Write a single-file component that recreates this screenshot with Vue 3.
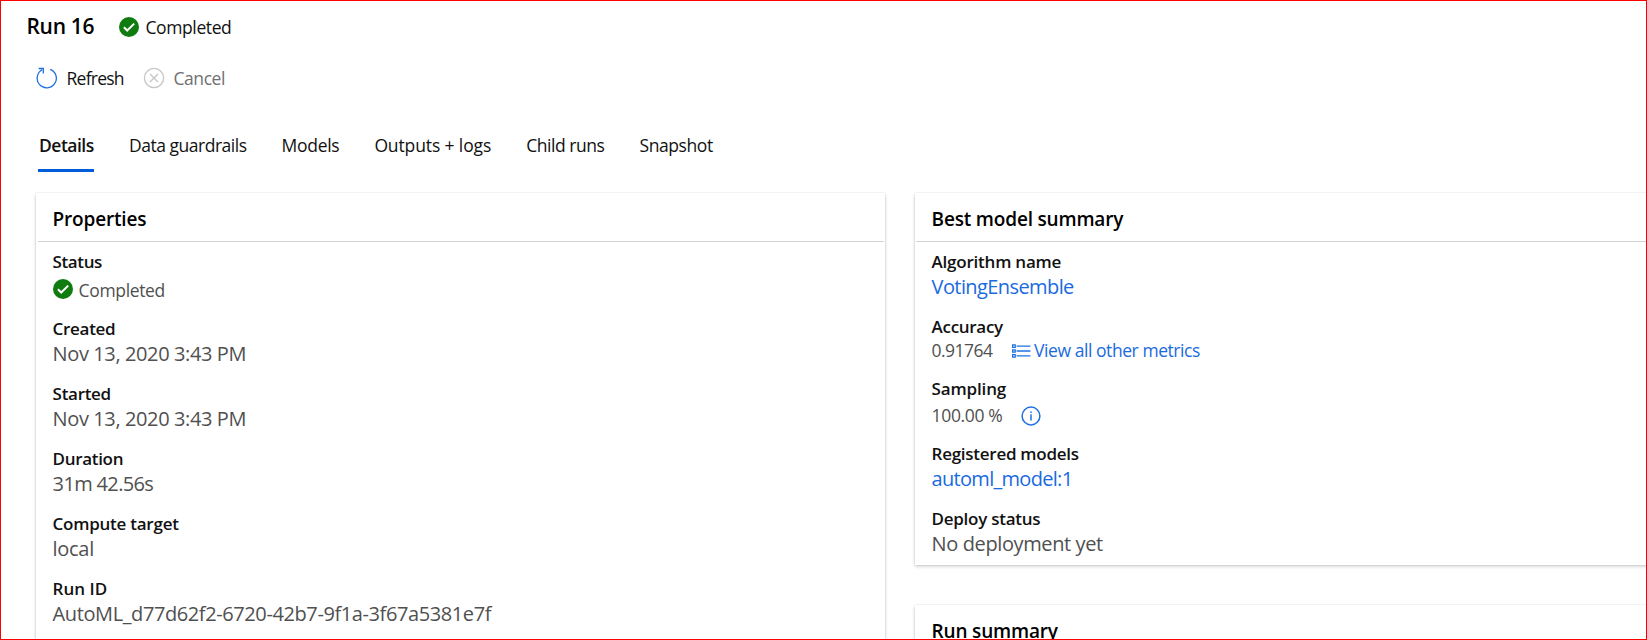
<script setup>
const tabs = [
  { label: 'Details', spacing: -0.5, active: true },
  { label: 'Data guardrails', spacing: -0.48 },
  { label: 'Models', spacing: -0.3 },
  { label: 'Outputs + logs', spacing: -0.12 },
  { label: 'Child runs', spacing: -0.45 },
  { label: 'Snapshot', spacing: -0.42 },
]

const properties = [
  { label: 'Status', ls: -0.4, value: 'Completed', vs: -0.35, kind: 'status' },
  { label: 'Created', ls: -0.3, value: 'Nov 13, 2020 3:43 PM', vs: -0.39 },
  { label: 'Started', ls: -0.3, value: 'Nov 13, 2020 3:43 PM', vs: -0.39 },
  { label: 'Duration', ls: -0.32, value: '31m 42.56s', vs: -0.65 },
  { label: 'Compute target', ls: -0.25, value: 'local', vs: -0.3 },
  { label: 'Run ID', ls: 0, value: 'AutoML_d77d62f2-6720-42b7-9f1a-3f67a5381e7f', vs: -0.4 },
]

const summary = [
  { label: 'Algorithm name', ls: -0.23, value: 'VotingEnsemble', vs: -0.59, kind: 'link' },
  { label: 'Accuracy', ls: -0.3, value: '0.91764', vs: -0.55, kind: 'metric' },
  { label: 'Sampling', ls: -0.15, value: '100.00 %', vs: -0.35, kind: 'sampling' },
  { label: 'Registered models', ls: -0.27, value: 'automl_model:1', vs: -0.7, kind: 'link' },
  { label: 'Deploy status', ls: -0.27, value: 'No deployment yet', vs: -0.39 },
]

const track = (px) => ({ letterSpacing: px + 'px' })
</script>

<template>
  <div class="page">
    <header class="title-row">
      <h1>Run 16</h1>
      <svg class="check" viewBox="0 0 20 20"><circle cx="10" cy="10" r="10" /><path d="M4.9 10.2 8.2 13.5 15.2 6.6" /></svg>
      <span class="state">Completed</span>
    </header>

    <div class="toolbar">
      <button class="cmd refresh">
        <svg viewBox="0 0 22 22"><path d="M14.2 2.3A9.6 9.6 0 1 1 6.2 2.8M2.6 1.5H7.3V6.4" /></svg>
        <span>Refresh</span>
      </button>
      <button class="cmd cancel">
        <svg viewBox="0 0 22 22"><circle cx="11" cy="11" r="9.6" /><path d="M7 7 15 15M15 7 7 15" /></svg>
        <span>Cancel</span>
      </button>
    </div>

    <nav class="tabs">
      <a v-for="t in tabs" :key="t.label" class="tab" :class="{ active: t.active }" :style="track(t.spacing)">{{ t.label }}</a>
    </nav>

    <main class="columns">
      <section class="card left">
        <h2>Properties</h2>
        <div class="body">
          <div v-for="f in properties" :key="f.label" class="field">
            <div class="label" :style="track(f.ls)">{{ f.label }}</div>
            <div v-if="f.kind === 'status'" class="value status">
              <svg class="check" viewBox="0 0 20 20"><circle cx="10" cy="10" r="10" /><path d="M4.9 10.2 8.2 13.5 15.2 6.6" /></svg>
              <span :style="track(f.vs)">{{ f.value }}</span>
            </div>
            <div v-else class="value" :style="track(f.vs)">{{ f.value }}</div>
          </div>
        </div>
      </section>

      <div class="right">
        <section class="card">
          <h2>Best model summary</h2>
          <div class="body">
            <div v-for="f in summary" :key="f.label" class="field">
              <div class="label" :style="track(f.ls)">{{ f.label }}</div>
              <div v-if="f.kind === 'metric'" class="value metric">
                <span class="number" :style="track(f.vs)">{{ f.value }}</span>
                <svg class="list" viewBox="0 0 19 14">
                  <path d="M.6.9h2.6v2.4H.6zM.6 5.8h2.6v2.4H.6zM.6 10.7h2.6v2.4H.6z" />
                  <path d="M4.6 2.1H18.4M4.6 7H18.4M4.6 11.9H18.4" />
                </svg>
                <a class="more">View all other metrics</a>
              </div>
              <div v-else-if="f.kind === 'sampling'" class="value sampling">
                <span class="number" :style="track(f.vs)">{{ f.value }}</span>
                <svg class="info" viewBox="0 0 20 20"><circle cx="10" cy="10" r="8.9" /><path d="M10 8.3V14.6M10 5.6V7" /></svg>
              </div>
              <div v-else class="value" :class="f.kind" :style="track(f.vs)">{{ f.value }}</div>
            </div>
          </div>
        </section>
        <section class="card">
          <h2>Run summary</h2>
        </section>
      </div>
    </main>
  </div>
</template>

<style>
body {
  margin: 0;
  overflow: hidden;
}
</style>

<style scoped>
.page {
  box-sizing: border-box;
  width: 1647px;
  height: 640px;
  overflow: hidden;
  border: 1px solid #f00;
  background: #fff;
  color: #111;
  font-family: 'Open Sans', 'Noto Sans', sans-serif;
  font-size: 17.5px;
  font-weight: 400;
  white-space: nowrap;
}
h1,
h2 {
  margin: 0;
  font-weight: 600;
  color: #000;
}
svg {
  display: block;
  flex: none;
  fill: none;
}
.title-row {
  display: flex;
  align-items: center;
  height: 52px;
  padding-left: 25.5px;
}
h1 {
  width: 92.5px;
  font-size: 21px;
  line-height: 50px;
  letter-spacing: -0.3px;
  padding-bottom: 2px;
}
.check {
  width: 20px;
  height: 20px;
}
.check circle {
  fill: #107c10;
}
.check path {
  stroke: #fff;
  stroke-width: 2;
}
.state {
  margin-left: 6.5px;
  letter-spacing: -0.4px;
  line-height: 51px;
}
.toolbar {
  display: flex;
  height: 52px;
  padding-left: 34.5px;
}
.cmd {
  display: flex;
  align-items: center;
  padding: 0;
  border: 0;
  background: none;
  font: inherit;
  color: #111;
  height: 50px;
}
.cmd svg {
  width: 22px;
  height: 22px;
  stroke-width: 1.3;
}
.refresh {
  width: 107px;
  letter-spacing: -0.75px;
}
.refresh svg {
  stroke: #2170e0;
}
.refresh span {
  margin-left: 9px;
}
.cancel {
  color: #707070;
  letter-spacing: -0.45px;
}
.cancel svg {
  stroke: #c8c6c4;
}
.cancel span {
  margin-left: 9px;
}
.tabs {
  display: flex;
  gap: 34px;
  height: 47px;
  margin-top: 20px;
  padding-left: 37px;
}
.tab {
  box-sizing: border-box;
  height: 47px;
  line-height: 40px;
  padding-left: 1px;
}
.tab.active {
  width: 56px;
  font-weight: 600;
  border-bottom: 3px solid #015cda;
}
.columns {
  display: flex;
  gap: 30px;
  margin: 21px 0 0 35px;
}
.card {
  background: #fff;
  box-shadow: 0 1.6px 3.6px rgba(0, 0, 0, 0.2), 0 0 1.2px rgba(0, 0, 0, 0.2);
}
.left {
  width: 849px;
  height: 480px;
  flex: none;
}
.right {
  display: flex;
  flex-direction: column;
  flex: none;
  gap: 40px;
  width: 760px;
}
h2 {
  height: 44px;
  margin: 0 1px;
  padding: 4px 0 0 15.6px;
  border-bottom: 1px solid #d2d2d2;
  font-size: 19px;
  line-height: 45px;
  letter-spacing: -0.18px;
}
.left h2 {
  margin-left: 2px;
  padding-left: 14.6px;
}
.body {
  display: flex;
  flex-direction: column;
  gap: 15px;
  padding: 8px 16px 8px 16.6px;
}
.label {
  font-size: 17px;
  font-weight: 600;
  line-height: 24px;
  color: #111;
}
.value {
  font-size: 20px;
  height: 26px;
  line-height: 26px;
  color: #505050;
}
.value.link,
.more {
  color: #1a6ae0;
}
.value.status,
.value.metric,
.value.sampling {
  display: flex;
  font-size: 17.5px;
}
.value.status {
  height: 28px;
  line-height: 32px;
  gap: 6px;
}
.status .check {
  margin-top: 5px;
}
.value.metric {
  height: 23px;
  line-height: 22px;
}
.metric .number {
  width: 80px;
}
.list {
  width: 19px;
  height: 14px;
  margin-top: 5px;
  stroke: #2170e0;
  stroke-width: 1.3;
}
.more {
  margin-left: 3.5px;
  letter-spacing: -0.44px;
}
.value.sampling {
  line-height: 28px;
  height: 26px;
}
.sampling .number {
  width: 89px;
}
.info {
  width: 20px;
  height: 20px;
  margin-top: 5px;
  stroke: #2170e0;
  stroke-width: 1.5;
}
</style>
